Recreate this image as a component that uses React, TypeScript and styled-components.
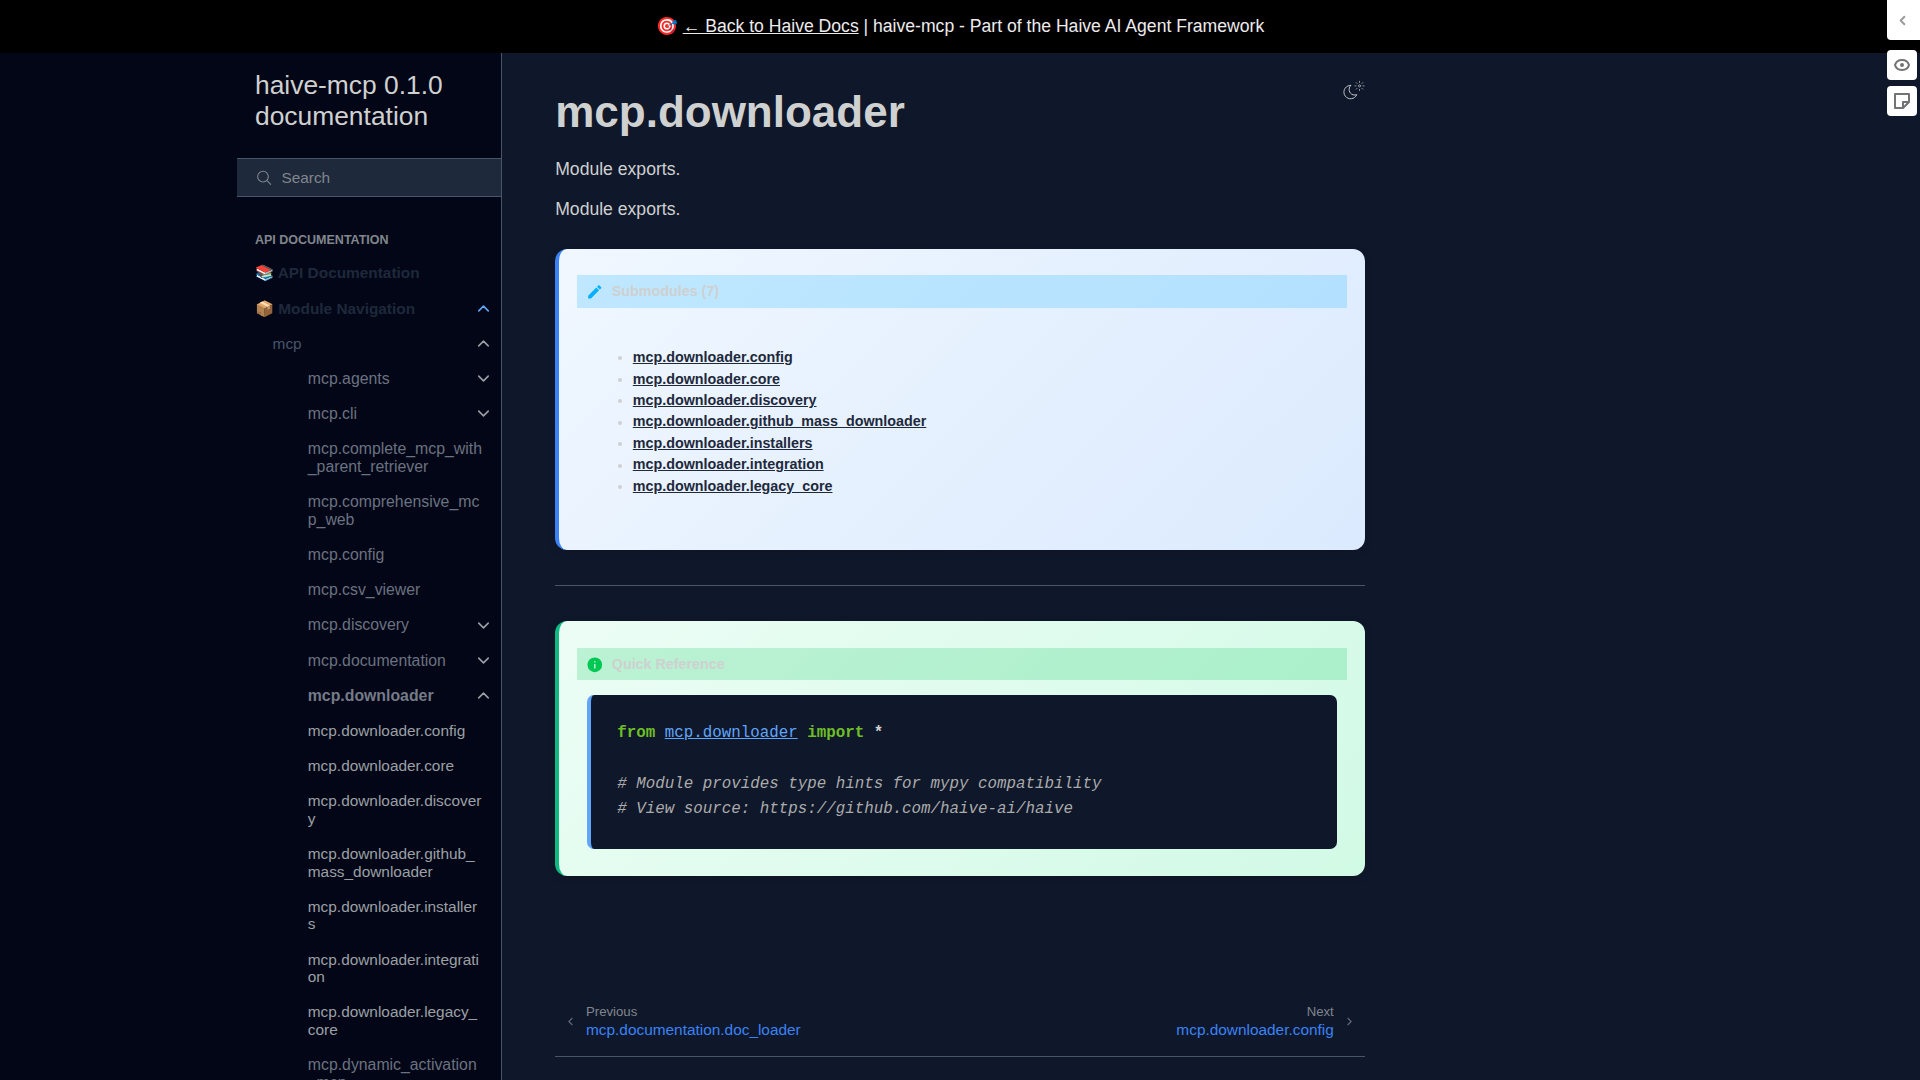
import React from "react";
import styled, { createGlobalStyle, css } from "styled-components";

const Global = createGlobalStyle`
  html { font-size: 17.6px; }
  *, *::before, *::after { box-sizing: border-box; }
  body {
    margin: 0;
    background: #0f172a;
    color: #cfd0d0;
    font-family: "Liberation Sans", Arial, sans-serif;
    overflow: hidden;
  }
  a { color: inherit; }
`;

const Page = styled.div`
  height: 1080px;
  display: flex;
  flex-direction: column;
  overflow: hidden;
`;

const Banner = styled.header`
  flex: none;
  height: 53px;
  display: flex;
  align-items: center;
  justify-content: center;
  background: #000;
  color: #eeebee;
  font-size: 17.6px;
  line-height: 26px;
  white-space: pre;
  padding-bottom: 1px;
`;

const Body = styled.div`
  flex: 1;
  min-height: 0;
  display: flex;
`;

const Sidebar = styled.aside`
  flex: none;
  width: 502.4px;
  display: flex;
  justify-content: flex-end;
  background: #020617;
  border-right: 1px solid #475569;
  overflow: hidden;
`;

const SidebarInner = styled.div`
  width: 264px;
  flex: none;
`;

const Brand = styled.div`
  height: 105px;
  padding: 17px 17.6px 0;
  font-size: 26.4px;
  line-height: 30.8px;
`;

const Search = styled.div`
  height: 39px;
  display: flex;
  align-items: center;
  gap: 9.4px;
  padding-left: 18.6px;
  background: #1e293b;
  border-top: 1px solid #475569;
  border-bottom: 1px solid #475569;
  color: #81868d;
  font-size: 15.4px;
`;

const Caption = styled.div`
  margin: 35px 17.6px 6.65px;
  height: 17px;
  font-size: 12.5px;
  line-height: 17px;
  font-weight: 700;
  color: #81868d;
  text-transform: uppercase;
`;

type Kind = "top" | "root" | "module" | "current" | "leaf";

const kinds = {
  top: css`padding-left: 17.6px; color: #1e293b; font-weight: 600; font-size: 15.4px;`,
  root: css`padding-left: 35.2px; color: #475569; font-size: 15.4px;`,
  module: css`padding-left: 70.4px; color: #6b7280; font-size: 15.84px;`,
  current: css`padding-left: 70.4px; color: #757b87; font-size: 15.84px; font-weight: 700;`,
  leaf: css`padding-left: 70.4px; color: #9ca0a5; font-size: 15.4px;`,
};

const NavRow = styled.div<{ $kind: Kind }>`
  display: flex;
  align-items: flex-start;
  padding: 8.8px 0;
  line-height: 17.6px;
  ${(p) => kinds[p.$kind]}
`;

const NavText = styled.span<{ $wide?: boolean }>`
  width: ${(p) => (p.$wide ? "176px" : "auto")};
  overflow-wrap: anywhere;
  white-space: pre-line;
`;

const Toggle = styled.span<{ $color: string }>`
  margin-left: auto;
  width: 35.2px;
  height: 17.6px;
  display: flex;
  align-items: center;
  justify-content: center;
  color: ${(p) => p.$color};
`;

const Main = styled.main`
  flex: none;
  width: 915px;
  padding: 0 52.8px;
`;

const Heading = styled.div`
  display: flex;
  justify-content: space-between;
  align-items: flex-start;
  padding-top: 26px;
  height: 103px;
`;

const Title = styled.h1`
  margin: 5px 0 0;
  font-size: 44px;
  line-height: 55px;
  font-weight: 700;
`;

const Para = styled.p`
  margin: 0 0 13.6px;
  font-size: 17.6px;
  line-height: 26.4px;
`;

const Card = styled.section<{ $tone: "blue" | "green" }>`
  border-radius: 12px;
  padding: ${(p) => (p.$tone === "blue" ? "26px" : "27px")} 17.6px 0;
  border-left: 4px solid ${(p) => (p.$tone === "blue" ? "#3b82f6" : "#10b981")};
  background: ${(p) =>
    p.$tone === "blue"
      ? "linear-gradient(135deg, #f0f7ff 0%, #dbeafe 100%)"
      : "linear-gradient(135deg, #ecfdf5 0%, #d1fae5 100%)"};
  height: ${(p) => (p.$tone === "blue" ? "301px" : "255px")};
  margin-top: ${(p) => (p.$tone === "blue" ? "27px" : "35px")};
  box-shadow: 0 2px 8px rgba(0, 0, 0, 0.1);
  font-size: 14.32px;
  line-height: 21.45px;
`;

const CardTitle = styled.div<{ $tone: "blue" | "green" }>`
  display: flex;
  align-items: center;
  gap: 8.6px;
  height: ${(p) => (p.$tone === "blue" ? "32.5px" : "32px")};
  padding-left: 8.8px;
  font-weight: 600;
  background: ${(p) =>
    p.$tone === "blue" ? "rgba(0, 176, 255, 0.2)" : "rgba(0, 200, 83, 0.2)"};
`;

const List = styled.ul`
  margin: 39.2px 0 0;
  padding: 0 0 0 56px;
  list-style: none;
`;

const ListItem = styled.li`
  display: flex;
  align-items: center;
  height: 21.45px;
  font-weight: 700;
  color: #1e293b;
  text-decoration-thickness: 1px;
  &::before {
    content: "";
    width: 4px;
    height: 4px;
    border-radius: 50%;
    background: #cfd0d0;
    margin: 1px 11px 0 -15px;
  }
`;

const Rule = styled.hr`
  margin: 35px 0 0;
  border: 0;
  height: 1px;
  background: #475569;
`;

const Code = styled.pre`
  margin: 15px 10px 0;
  height: 154px;
  padding: 26px 26.4px 24px;
  border-left: 4px solid #60a5fa;
  border-radius: 7px;
  background: #0f172a;
  color: #d0d0d0;
  font-family: "Liberation Mono", monospace;
  font-size: 15.84px;
  line-height: 25.34px;
  b { color: #6ebf26; }
  strong { color: #d0d0d0; }
  i { color: #ababab; }
  a { color: #60a5fa; }
`;

const Pager = styled.nav`
  margin-top: 118px;
  height: 63px;
  display: flex;
  justify-content: space-between;
  padding: 9px 8.8px 0;
  border-bottom: 1px solid #475569;
`;

const PagerLink = styled.div<{ $end?: boolean }>`
  display: flex;
  height: 37px;
  align-items: center;
  gap: 9px;
  text-align: ${(p) => (p.$end ? "right" : "left")};
  color: #64697a;
`;

const PagerLabel = styled.div`
  font-size: 13.2px;
  line-height: 18px;
  color: #81868d;
`;

const PagerTitle = styled.div`
  font-size: 15.4px;
  line-height: 17px;
  padding-bottom: 2px;
  color: #3b82f6;
`;

const Footer = styled.footer`
  margin-top: 18px;
  color: #81868d;
  font-size: 14.3px;
  line-height: 22px;
`;

const Tools = styled.div`
  position: fixed;
  top: 0;
  right: 0;
  display: flex;
  flex-direction: column;
  align-items: flex-end;
`;

const ToolButton = styled.button<{ $tab?: boolean }>`
  display: flex;
  align-items: center;
  justify-content: center;
  border: 0;
  background: #fff;
  color: ${(p) => (p.$tab ? "#9a9a9a" : "#737373")};
  width: ${(p) => (p.$tab ? "33px" : "30px")};
  height: ${(p) => (p.$tab ? "40px" : "30px")};
  margin: ${(p) => (p.$tab ? "0 0 10px" : "0 3px 6px 0")};
  padding: ${(p) => (p.$tab ? "0 3px 0 0" : "0")};
  border-radius: ${(p) => (p.$tab ? "0 0 0 4px" : "4px")};
`;

const Chevron = ({ dir, size = 19, width = 1.5 }: { dir: "up" | "down" | "left" | "right"; size?: number; width?: number }) => {
  const points = {
    up: "6 15 12 9 18 15",
    down: "6 9 12 15 18 9",
    left: "15 6 9 12 15 18",
    right: "9 6 15 12 9 18",
  };
  return (
    <svg width={size} height={size} viewBox="0 0 24 24" fill="none" stroke="currentColor" strokeWidth={width} strokeLinecap="round" strokeLinejoin="round">
      <polyline points={points[dir]} />
    </svg>
  );
};

const SearchIcon = () => (
  <svg width="16" height="16" viewBox="0 0 24 24" fill="none" stroke="currentColor" strokeWidth="1.6" strokeLinecap="round">
    <circle cx="10.5" cy="10" r="8" />
    <line x1="16.5" y1="16" x2="22" y2="21.500" />
  </svg>
);

const ThemeIcon = () => (
  <svg width="22" height="22" viewBox="0 0 24 24" fill="none" stroke="#cfd0d0" strokeWidth="1" strokeLinecap="round" strokeLinejoin="round">
    <path d="M8.282 7.007C8.385 7.007 8.494 7.007 8.595 7.007C5.18 10.184 6.481 15.869 10.942 17.24C12.275 17.648 13.706 17.589 15 17.066C12.851 22.236 5.91 23.143 2.505 18.696C-.897 14.249 1.791 7.786 7.342 7.063C7.652 7.021 7.965 7 8.282 7.007Z" />
    <g opacity="0.75">
      <path d="M18 3.705V2.5M18 11.295V12.5M15.316 4.816L14.464 3.964M20.711 10.212L21.563 11.063M14.205 7.5H13.001M21.795 7.5H23M15.316 10.184L14.464 11.036M20.711 4.789L21.563 3.937" />
      <circle cx="18" cy="7.5" r="1.169" />
    </g>
  </svg>
);

const PencilIcon = () => (
  <svg width="17.6" height="17.6" viewBox="0 0 24 24" fill="#00b0ff">
    <path d="M20.71 7.04c.39-.39.39-1.04 0-1.41l-2.34-2.34c-.37-.39-1.02-.39-1.41 0l-1.84 1.83 3.75 3.75M3 17.25V21h3.75L17.81 9.93l-3.75-3.75L3 17.25z" />
  </svg>
);

const InfoIcon = () => (
  <svg width="17.6" height="17.6" viewBox="0 0 24 24" fill="#00c853">
    <path d="M13 9h-2V7h2m0 10h-2v-6h2m-1-9A10 10 0 0 0 2 12a10 10 0 0 0 10 10 10 10 0 0 0 10-10A10 10 0 0 0 12 2z" />
  </svg>
);

const EyeIcon = () => (
  <svg width="16" height="16" viewBox="0 0 16 16" fill="none" stroke="currentColor" strokeWidth="2">
    <path d="M1 8C2 4.5 4.700 3 8 3S14 4.500 15 8C14 11.500 11.300 13 8 13S2 11.500 1 8Z" />
    <circle cx="8" cy="8" r="2" fill="currentColor" stroke="none" />
  </svg>
);

const NoteIcon = () => (
  <svg width="16" height="16" viewBox="0 0 16 16" fill="none" stroke="currentColor" strokeWidth="2" strokeLinejoin="round">
    <path d="M1 1H15V9L9 15H1ZM9 15V9H15" />
  </svg>
);

const nav: { text: string; kind: Kind; open?: boolean; accent?: boolean }[] = [
  { text: "📚 API Documentation", kind: "top" },
  { text: "📦 Module Navigation", kind: "top", open: true, accent: true },
  { text: "mcp", kind: "root", open: true },
  { text: "mcp.agents", kind: "module", open: false },
  { text: "mcp.cli", kind: "module", open: false },
  { text: "mcp.complete_mcp_with\n_parent_retriever", kind: "module" },
  { text: "mcp.comprehensive_mc\np_web", kind: "module" },
  { text: "mcp.config", kind: "module" },
  { text: "mcp.csv_viewer", kind: "module" },
  { text: "mcp.discovery", kind: "module", open: false },
  { text: "mcp.documentation", kind: "module", open: false },
  { text: "mcp.downloader", kind: "current", open: true },
  { text: "mcp.downloader.config", kind: "leaf" },
  { text: "mcp.downloader.core", kind: "leaf" },
  { text: "mcp.downloader.discovery", kind: "leaf" },
  { text: "mcp.downloader.github_\nmass_downloader", kind: "leaf" },
  { text: "mcp.downloader.installers", kind: "leaf" },
  { text: "mcp.downloader.integration", kind: "leaf" },
  { text: "mcp.downloader.legacy_\ncore", kind: "leaf" },
  { text: "mcp.dynamic_activation\n_mcp", kind: "module" },
];

const submodules = ["config", "core", "discovery", "github_mass_downloader", "installers", "integration", "legacy_core"];

export default function App() {
  return (
    <Page>
      <Global />
      <Banner>
        🎯 <a href="#docs">← Back to Haive Docs</a> | haive-mcp - Part of the Haive AI Agent Framework
      </Banner>
      <Body>
        <Sidebar>
          <SidebarInner>
            <Brand>haive-mcp 0.1.0 documentation</Brand>
            <Search>
              <SearchIcon />
              Search
            </Search>
            <Caption>API Documentation</Caption>
            {nav.map((n) => (
              <NavRow key={n.text} $kind={n.kind}>
                <NavText $wide={n.open === undefined && n.kind !== "top"}>{n.text}</NavText>
                {n.open !== undefined && (
                  <Toggle $color={n.accent ? "#60a5fa" : "#9ca0a5"}>
                    <Chevron dir={n.open ? "up" : "down"} width={2} />
                  </Toggle>
                )}
              </NavRow>
            ))}
          </SidebarInner>
        </Sidebar>
        <Main>
          <Heading>
            <Title>mcp.downloader</Title>
            <ThemeIcon />
          </Heading>
          <Para>Module exports.</Para>
          <Para>Module exports.</Para>
          <Card $tone="blue">
            <CardTitle $tone="blue">
              <PencilIcon />
              Submodules (7)
            </CardTitle>
            <List>
              {submodules.map((s) => (
                <ListItem key={s}>
                  <a href={"#" + s}>mcp.downloader.{s}</a>
                </ListItem>
              ))}
            </List>
          </Card>
          <Rule />
          <Card $tone="green">
            <CardTitle $tone="green">
              <InfoIcon />
              Quick Reference
            </CardTitle>
            <Code>
              <b>from</b> <a href="#mcp">mcp.downloader</a> <b>import</b> <strong>*</strong>
              {"\n\n"}
              <i># Module provides type hints for mypy compatibility</i>
              {"\n"}
              <i># View source: https://github.com/haive-ai/haive</i>
            </Code>
          </Card>
          <Pager>
            <PagerLink>
              <Chevron dir="left" size={13} width={2} />
              <div>
                <PagerLabel>Previous</PagerLabel>
                <PagerTitle>mcp.documentation.doc_loader</PagerTitle>
              </div>
            </PagerLink>
            <PagerLink $end>
              <div>
                <PagerLabel>Next</PagerLabel>
                <PagerTitle>mcp.downloader.config</PagerTitle>
              </div>
              <Chevron dir="right" size={13} width={2} />
            </PagerLink>
          </Pager>
          <Footer>Copyright © 2025, Haive Team</Footer>
        </Main>
      </Body>
      <Tools>
        <ToolButton $tab>
          <Chevron dir="left" size={15} width={3} />
        </ToolButton>
        <ToolButton>
          <EyeIcon />
        </ToolButton>
        <ToolButton>
          <NoteIcon />
        </ToolButton>
      </Tools>
    </Page>
  );
}
